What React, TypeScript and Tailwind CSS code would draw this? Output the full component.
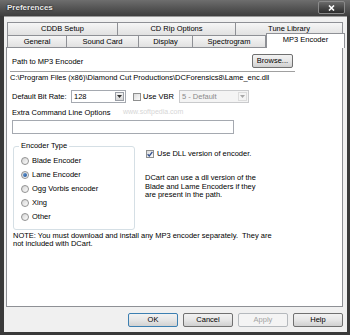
import React from "react";

const ui = "font-['Liberation_Sans',Arial,sans-serif] text-[7.5px] leading-[8px] text-black";

function Tab({ label, w, selected }: { label: string; w: number; selected?: boolean }) {
    if (selected) {
        return (
            <div
                style={{ width: w }}
                className="relative z-10 -mb-px flex h-[15px] items-start justify-center border border-b-0 border-[#8e9095] bg-white pt-[2px] text-[7.5px]"
            >
                {label}
            </div>
        );
    }
    return (
        <div
            style={{ width: w }}
            className="flex h-full items-center justify-center border border-b-0 border-[#8e9095] bg-gradient-to-b from-[#f6f6f6] to-[#e1e1e1] -ml-px first:ml-0"
        >
            {label}
        </div>
    );
}

function Arrow({ disabled }: { disabled?: boolean }) {
    return (
        <svg width="5" height="3" viewBox="0 0 5 3">
            <path d="M0 0 L5 0 L2.5 3 Z" fill={disabled ? "#a8a8a8" : "#303030"} />
        </svg>
    );
}

function Combo({ w, value, disabled }: { w: number; value: string; disabled?: boolean }) {
    return (
        <div
            style={{ width: w }}
            className={`flex h-[13px] items-stretch border ${disabled ? "border-[#c9cacc] bg-[#f4f4f4] text-[#8a8a8a]" : "border-[#a5a9b0] bg-white"}`}
        >
            <div className="flex flex-1 items-center pl-[2px]">{value}</div>
            <div
                className={`m-px flex w-[9px] items-center justify-center border ${disabled ? "border-[#dcdcdc] bg-[#f4f4f4]" : "border-[#9a9ea6] bg-gradient-to-b from-[#f2f2f2] to-[#d6d6d6]"}`}
            >
                <Arrow disabled={disabled} />
            </div>
        </div>
    );
}

function Check({ checked }: { checked?: boolean }) {
    return (
        <div className="flex h-[8px] w-[8px] items-center justify-center border border-[#8e8f8f] bg-gradient-to-br from-[#dcdcdc] to-[#fbfbfb]">
            {checked && (
                <svg width="6" height="6" viewBox="0 0 6 6">
                    <path d="M0.6 3.2 L2.3 4.9 L5.4 0.9" stroke="#34508e" strokeWidth="1.3" fill="none" />
                </svg>
            )}
        </div>
    );
}

function Radio({ label, on }: { label: string; on?: boolean }) {
    return (
        <div className="flex h-[14px] items-center pl-[7px]">
            <div className="flex h-[8px] w-[8px] items-center justify-center rounded-full border border-[#929292] bg-gradient-to-br from-[#d4d4d4] to-[#fdfdfd]">
                {on && <div className="h-[4px] w-[4px] rounded-full bg-gradient-to-br from-[#6fa2d9] to-[#1b4f95]" />}
            </div>
            <span className="ml-[3px]">{label}</span>
        </div>
    );
}

function Button({ label, primary, disabled }: { label: string; primary?: boolean; disabled?: boolean }) {
    const look = disabled
        ? "border-[#b5b9bd] bg-[#f4f4f4] text-[#a3a3a3]"
        : primary
          ? "border-[#3c7fb1] bg-gradient-to-b from-[#f2f2f2] via-[#e6e6e6] to-[#d2d2d2]"
          : "border-[#707070] bg-gradient-to-b from-[#f2f2f2] via-[#e6e6e6] to-[#d0d0d0]";
    return (
        <div className={`flex h-[14px] w-[50px] items-center justify-center rounded-[2px] border ${look}`}>
            {label}
        </div>
    );
}

export default function App() {
    return (
        <div className={`${ui} flex h-[335px] w-[350px] flex-col bg-[#3a3a3a]`}>
            {/* title bar */}
            <div className="flex h-[16px] shrink-0 items-start bg-gradient-to-b from-[#6e6e6e] via-[#555555] to-[#3e3e3e]">
                <span className="ml-[7px] mt-[4px] text-[8px] font-bold text-[#ececec] [text-shadow:0_0_2px_#000]">
                    Preferences
                </span>
                <div className="ml-auto mr-[5px] mt-[1px] flex h-[13px] w-[27px] items-center justify-center rounded-[2px] border border-[#8a8a8a] bg-gradient-to-b from-[#6a6a6a] to-[#2c2c2c]">
                    <svg width="7" height="6" viewBox="0 0 7 6">
                        <path d="M1 0.5 L6 5.5 M6 0.5 L1 5.5" stroke="#ffffff" strokeWidth="1.6" />
                    </svg>
                </div>
            </div>

            {/* client area */}
            <div className="mb-[3px] ml-[4px] mr-[3px] flex flex-1 flex-col border-t border-[#9a9a9a] bg-[#f0f0f0]">
                {/* tabs */}
                <div className="ml-[3px] mt-[5px] flex flex-col">
                    <div className="flex h-[13px]">
                        <Tab label="CDDB Setup" w={111} />
                        <Tab label="CD Rip Options" w={119} />
                        <Tab label="Tune Library" w={108} />
                    </div>
                    <div className="flex h-[12px] items-end">
                        <Tab label="General" w={60} />
                        <Tab label="Sound Card" w={73} />
                        <Tab label="Display" w={55} />
                        <Tab label="Spectrogram" w={74} />
                        <Tab label="MP3 Encoder" w={79} selected />
                    </div>
                </div>

                {/* panel */}
                <div className="relative ml-[2px] flex h-[260px] w-[337px] flex-col border border-[#8e9095] bg-white">
                    <span className="absolute left-[116px] top-[60px] text-[7px] text-[#d6d6d6]">www.softpedia.com</span>

                    <div className="mt-[6px] flex h-[14px] items-center">
                        <span className="ml-[5px] pt-[1px]">Path to MP3 Encoder</span>
                        <div className="ml-auto mr-[49px] flex h-[14px] w-[41px] items-center justify-center rounded-[2px] border border-[#707070] bg-gradient-to-b from-[#f2f2f2] via-[#e6e6e6] to-[#d0d0d0]">
                            Browse...
                        </div>
                    </div>
                    <div className="ml-[3px] mt-[3px] h-px w-[285px] bg-[#a0a0a0]" />
                    <div className="ml-[3px] mt-[2px]">
                        C:\Program Files (x86)\Diamond Cut Productions\DCForensics8\Lame_enc.dll
                    </div>

                    <div className="mt-[8px] flex h-[13px] items-center">
                        <span className="w-[64px] pl-[5px]">Default Bit Rate:</span>
                        <Combo w={55} value="128" />
                        <div className="ml-[7px]">
                            <Check />
                        </div>
                        <span className="ml-[2px] w-[36px]">Use VBR</span>
                        <Combo w={70} value="5 - Default" disabled />
                    </div>

                    <div className="ml-[5px] mt-[6px]">Extra Command Line Options</div>
                    <div className="ml-[5px] mt-[3px] h-[14px] w-[222px] border border-[#a5a9b0] bg-white" />

                    <div className="mt-[12px] flex">
                        <div className="relative ml-[6px] flex h-[84px] w-[122px] flex-col rounded-[3px] border border-[#d5dfe5] pt-[7px]">
                            <span className="absolute -top-[5px] left-[5px] bg-white px-[2px]">Encoder Type</span>
                            <Radio label="Blade Encoder" />
                            <Radio label="Lame Encoder" on />
                            <Radio label="Ogg Vorbis encoder" />
                            <Radio label="Xing" />
                            <Radio label="Other" />
                        </div>
                        <div className="ml-[10px] flex flex-col">
                            <div className="mt-[4px] flex h-[8px] items-center">
                                <div className="ml-[1px]">
                                    <Check checked />
                                </div>
                                <span className="ml-[3px]">Use DLL version of encoder.</span>
                            </div>
                            <p className="mt-[16px] leading-[8.5px]">
                                DCart can use a dll version of the
                                <br />
                                Blade and Lame Encoders if they
                                <br />
                                are present in the path.
                            </p>
                        </div>
                    </div>

                    <p className="ml-[6px] mt-[2px] whitespace-pre">
                        {"NOTE: You must download and install any MP3 encoder separately.  They are\nnot included with DCart."}
                    </p>
                </div>

                {/* buttons */}
                <div className="mr-[4px] mt-[6px] flex justify-end gap-[5px]">
                    <Button label="OK" primary />
                    <Button label="Cancel" />
                    <Button label="Apply" disabled />
                    <Button label="Help" />
                </div>
            </div>
        </div>
    );
}
